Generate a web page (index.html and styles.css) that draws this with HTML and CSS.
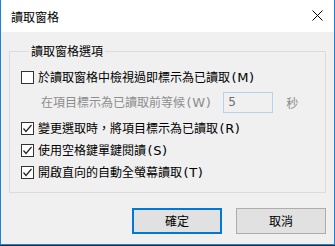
FILE: index.html
```html
<!DOCTYPE html>
<html lang="zh-Hant">
<head>
<meta charset="utf-8">
<link rel="stylesheet" href="styles.css">
</head>
<body>
<div class="window">
  <div class="titlebar">
    <span class="title">讀取窗格</span>
    <svg class="close" width="11" height="11" viewBox="0 0 11 11"><path d="M0.5 0.5 L10.5 10.5 M10.5 0.5 L0.5 10.5" stroke="#000" stroke-width="1" fill="none"/></svg>
  </div>
  <div class="content">
    <fieldset class="group">
      <legend class="legend">讀取窗格選項</legend>
      <div class="row">
        <span class="box"></span>
        <span class="label">於讀取窗格中檢視過即標示為已讀取<span class="key">(M)</span></span>
      </div>
      <div class="row wait">
        <span class="label dim">在項目標示為已讀取前等候<span class="key">(W)</span></span>
        <span class="input">5</span>
        <span class="label dim unit">秒</span>
      </div>
      <div class="row">
        <span class="box"><svg width="11" height="11" viewBox="0 0 11 11"><path d="M1.5 5.5 L4 8.5 L9.5 2" stroke="#222" stroke-width="1.2" fill="none"/></svg></span>
        <span class="label">變更選取時，將項目標示為已讀取<span class="key">(R)</span></span>
      </div>
      <div class="row">
        <span class="box"><svg width="11" height="11" viewBox="0 0 11 11"><path d="M1.5 5.5 L4 8.5 L9.5 2" stroke="#222" stroke-width="1.2" fill="none"/></svg></span>
        <span class="label">使用空格鍵單鍵閱讀<span class="key">(S)</span></span>
      </div>
      <div class="row">
        <span class="box"><svg width="11" height="11" viewBox="0 0 11 11"><path d="M1.5 5.5 L4 8.5 L9.5 2" stroke="#222" stroke-width="1.2" fill="none"/></svg></span>
        <span class="label">開啟直向的自動全螢幕讀取<span class="key">(T)</span></span>
      </div>
    </fieldset>
    <div class="buttons">
      <button class="btn primary">確定</button>
      <button class="btn">取消</button>
    </div>
  </div>
</div>
</body>
</html>
```
FILE: styles.css
```css
html, body {
  margin: 0;
  padding: 0;
  background: #2b2b2b;
}
body {
  font-family: "Noto Sans CJK TC", "Microsoft JhengHei", sans-serif;
  font-size: 12px;
  color: #000;
}
.window {
  width: 335px;
  height: 245px;
  box-sizing: border-box;
  border: 1px solid #1883d7;
  border-top: none;
  background: #f0f0f0;
  display: flex;
  flex-direction: column;
}
.titlebar {
  height: 32px;
  background: #fff;
  display: flex;
  align-items: center;
  justify-content: space-between;
  padding: 0 11px 0 10px;
  flex: none;
}
.title {
  line-height: 16px;
  margin-top: 1px;
}
.close {
  display: block;
  margin-top: -1px;
}
.content {
  padding: 11px 8px 0 8px;
}
.group {
  margin: 0;
  border: 1px solid #dcdcdc;
  padding: 7px 0 9px 11px;
  width: 317px;
  box-sizing: border-box;
}
.legend {
  margin-left: 8px;
  padding: 0 2px;
  line-height: 16px;
}
.row {
  display: flex;
  align-items: center;
  height: 22px;
}
.row.wait {
  height: 29px;
  padding-left: 20px;
}
.box {
  width: 13px;
  height: 13px;
  box-sizing: border-box;
  border: 1px solid #333;
  background: #fff;
  margin-right: 4px;
  flex: none;
  display: flex;
  align-items: center;
  justify-content: center;
}
.box svg {
  display: block;
}
.label {
  line-height: 16px;
  white-space: nowrap;
}
.key {
  font-family: "DejaVu Sans", "Noto Sans", sans-serif;
  font-size: 13px;
  letter-spacing: 0.6px;
  padding-left: 1.5px;
}
.dim {
  color: #8d8d8d;
}
.input {
  width: 50px;
  height: 21px;
  box-sizing: border-box;
  border: 1px solid #b9d1ea;
  background: #f0f0f0;
  color: #6d6d6d;
  margin-left: 12px;
  padding-left: 4px;
  line-height: 19px;
  font-family: "DejaVu Sans", "Noto Sans", sans-serif;
  font-size: 12px;
}
.unit {
  margin-left: 13px;
}
.buttons {
  display: flex;
  justify-content: flex-end;
  gap: 14px;
  margin-top: 15px;
}
.btn {
  width: 90px;
  height: 26px;
  box-sizing: border-box;
  border: 1px solid #adadad;
  background: #e1e1e1;
  font-family: inherit;
  font-size: 12px;
  color: #000;
  padding: 0;
  margin: 0;
  line-height: 16px;
}
.btn.primary {
  border: 2px solid #0078d7;
}
```
